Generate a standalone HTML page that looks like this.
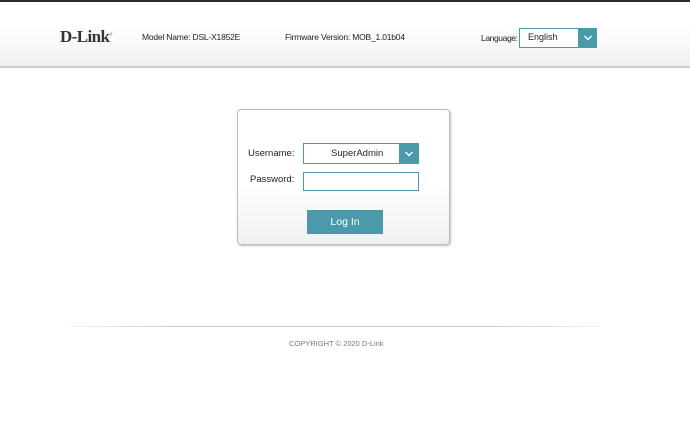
<!DOCTYPE html>
<html><head><style>
body{margin:0;width:690px;height:437px;background:#fff;font-family:"Liberation Sans",sans-serif;position:relative;overflow:hidden}
.top{position:absolute;left:0;top:0;width:690px;height:2px;background:#2b2b2b}
.hdr{position:absolute;left:0;top:2px;width:690px;height:64px;background:linear-gradient(#fff 40%,#f0f0f0);border-bottom:2px solid #cfcfcf}
.t{position:absolute;font-size:8.5px;color:#222;white-space:nowrap}
.logo{position:absolute;left:60px;top:27px;font-family:"Liberation Serif",serif;font-weight:bold;font-size:17px;color:#333;letter-spacing:-0.6px}
.sel{position:absolute;border:1px solid #4a9aac;background:#fff;box-sizing:border-box}
.arr{position:absolute;top:-1px;bottom:-1px;right:-1px;background:#4a9aac}
.arr svg{position:absolute;left:50%;top:50%;transform:translate(-50%,-50%)}
.box{position:absolute;left:237px;top:109px;width:213px;height:136px;box-sizing:border-box;border:1px solid #bbb;border-radius:4px;background:linear-gradient(#fff 55%,#f0f0f0);box-shadow:1px 1px 2px rgba(0,0,0,.25)}
.btn{position:absolute;left:307px;top:210px;width:76px;height:24px;background:#4a9aac;color:#fff;font-size:10.5px;text-align:center;line-height:24px}
.line{position:absolute;left:70px;top:326px;width:530px;height:1px;background:linear-gradient(90deg,#f4f4f4,#ccc 20%,#ccc 80%,#f4f4f4)}
</style></head><body>
<div class="top"></div>
<div class="hdr"></div>
<div class="logo">D-Link<sup style="font-size:4px;font-weight:normal">®</sup></div>
<div class="t" style="left:142px;top:32px;letter-spacing:-0.2px">Model Name: DSL-X1852E</div>
<div class="t" style="left:285px;top:32px;letter-spacing:-0.2px">Firmware Version: MOB_1.01b04</div>
<div class="t" style="left:481px;top:33px;letter-spacing:-0.4px">Language:</div>
<div class="sel" style="left:519px;top:28px;width:78px;height:20px"><span class="t" style="left:8px;top:3px;font-size:9px">English</span><div class="arr" style="width:19px"><svg width="9" height="6"><path d="M1 1l3.5 3.5L8 1" stroke="#fff" stroke-width="1.4" fill="none"/></svg></div></div>
<div class="box"></div>
<div class="t" style="left:248px;top:148px;font-size:9.5px">Username:</div>
<div class="t" style="left:250px;top:174px;font-size:9.5px">Password:</div>
<div class="sel" style="left:303px;top:143px;width:116px;height:21px"><span class="t" style="left:27px;top:4px;font-size:9.5px">SuperAdmin</span><div class="arr" style="width:20px"><svg width="9" height="6"><path d="M1 1l3.5 3.5L8 1" stroke="#fff" stroke-width="1.4" fill="none"/></svg></div></div>
<div class="sel" style="left:303px;top:172px;width:116px;height:19px"></div>
<div class="btn">Log In</div>
<div class="line"></div>
<div class="t" style="left:289px;top:339px;font-size:7.5px;color:#777">COPYRIGHT © 2020 D-Link</div>
</body></html>
